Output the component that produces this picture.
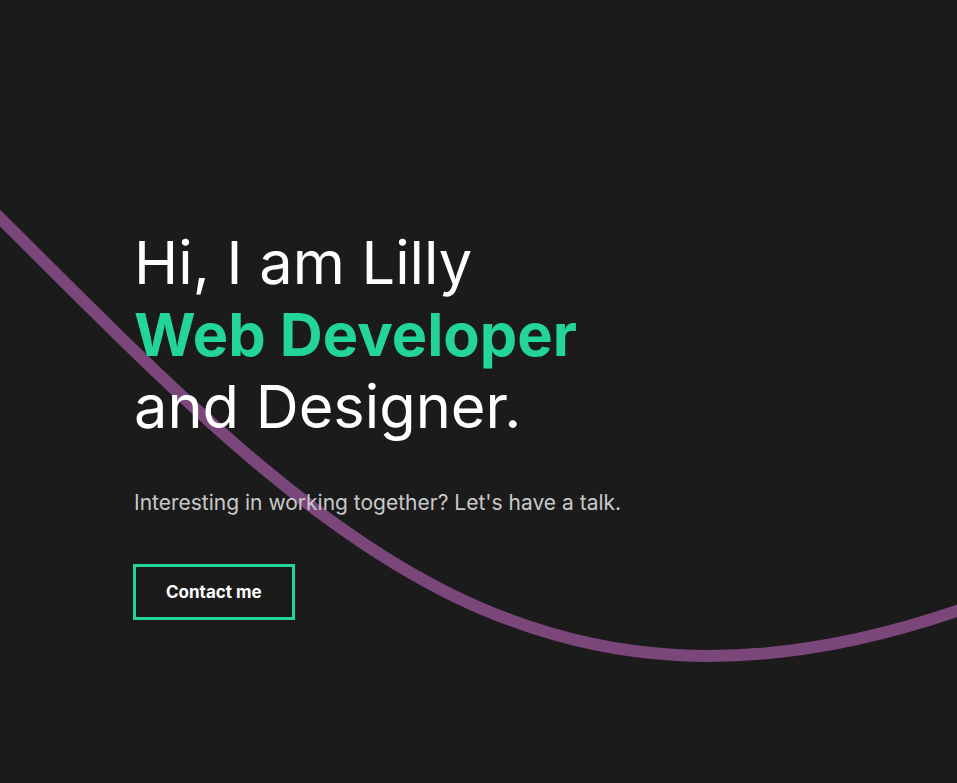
import React from "react";

export default function App() {
  return (
    <div
      className="relative min-h-[783px] w-full overflow-hidden bg-[#1b1b1b]"
      style={{ fontFamily: "Inter, 'Noto Sans', sans-serif" }}
    >
      <svg
        className="pointer-events-none absolute inset-0 h-[783px] w-full"
        viewBox="0 0 957 783"
        preserveAspectRatio="none"
      >
        <path
          d="M -20 198 L 0 218 C 300 516, 520 760, 957 611 L 985 601"
          fill="none"
          stroke="#7b477b"
          strokeWidth="12"
          strokeLinejoin="round"
        />
      </svg>
      <div className="relative pl-[134px] pt-[226px]">
        <h1 className="text-[59.5px] leading-[72px] font-normal text-white">
          Hi, I am Lilly
          <br />
          <span className="font-bold text-[#23d596]">Web Developer</span>
          <br />
          and Designer.
        </h1>
        <p className="mt-[47px] text-[21px] leading-[28px] text-[#c9c9c9]">
          Interesting in working together? Let's have a talk.
        </p>
        <button className="mt-[47px] -ml-px border-[3px] border-[#23d596] px-[30px] py-[13px] text-[17px] leading-[24px] font-bold text-white">
          Contact me
        </button>
      </div>
    </div>
  );
}
